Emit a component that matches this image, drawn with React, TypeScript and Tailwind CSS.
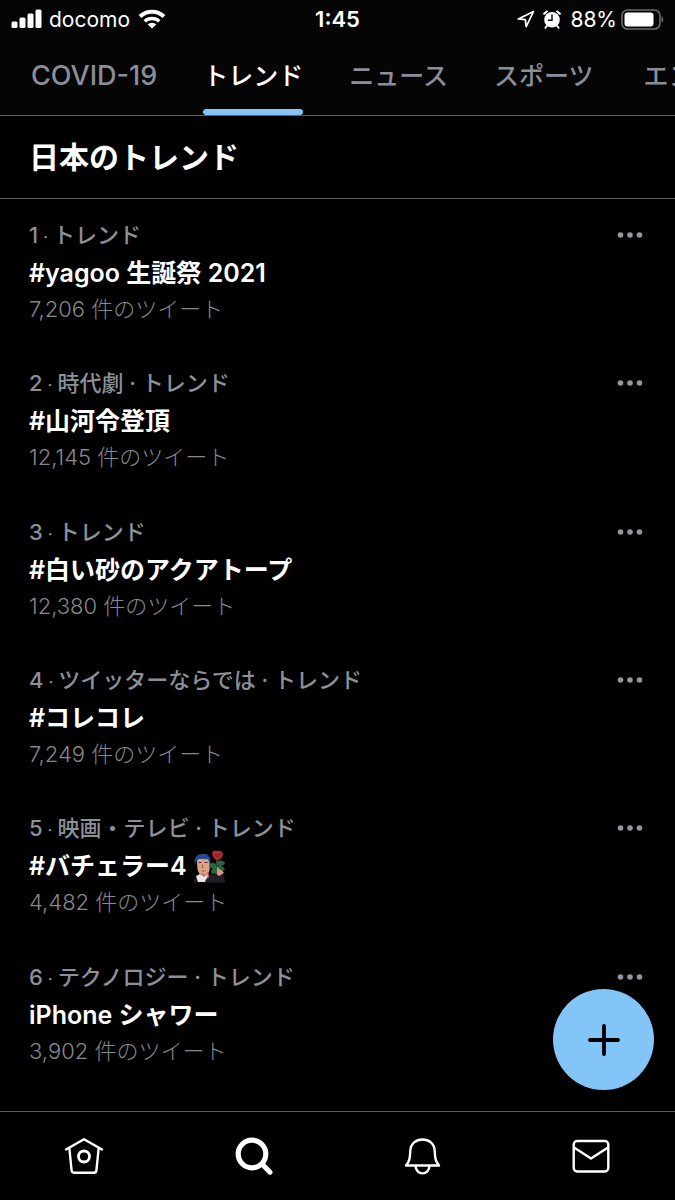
import { useState } from 'react';
import clsx from 'clsx';

const tabs = ['COVID-19', 'トレンド', 'ニュース', 'スポーツ', 'エンタメ'];

interface Trend {
  rank: number;
  category: string;
  name: string;
  tweets: string;
  sticker?: boolean;
}

const trends: Trend[] = [
  { rank: 1, category: 'トレンド', name: '#yagoo 生誕祭 2021', tweets: '7,206' },
  { rank: 2, category: '時代劇 · トレンド', name: '#山河令登頂', tweets: '12,145' },
  { rank: 3, category: 'トレンド', name: '#白い砂のアクアトープ', tweets: '12,380' },
  { rank: 4, category: 'ツイッターならでは · トレンド', name: '#コレコレ', tweets: '7,249' },
  { rank: 5, category: '映画・テレビ · トレンド', name: '#バチェラー4', tweets: '4,482', sticker: true },
  { rank: 6, category: 'テクノロジー · トレンド', name: 'iPhone シャワー', tweets: '3,902' },
];

function StatusBar() {
  return (
    <div className="grid h-[38px] grid-cols-3 items-center px-[11px] text-[21px] leading-none">
      <div className="flex items-center">
        <svg width="31" height="20" viewBox="0 0 31 20" fill="currentColor" aria-label="電波">
          <rect x="0.5" y="12.5" width="6" height="6.5" rx="1.5" />
          <rect x="8.5" y="8.5" width="6" height="10.5" rx="1.5" />
          <rect x="16.5" y="4.5" width="6" height="14.5" rx="1.5" />
          <rect x="24.5" y="0.5" width="6" height="18.5" rx="1.5" />
        </svg>
        <span className="ml-[7px]">docomo</span>
        <svg className="ml-2" width="28" height="20" viewBox="0 0 28 20" aria-label="Wi-Fi">
          <path d="M2 7.500a17.500 17.500 0 0 1 24 0" fill="none" stroke="currentColor" strokeWidth="3.8" />
          <path d="M6.700 12.300a10.800 10.800 0 0 1 14.600 0" fill="none" stroke="currentColor" strokeWidth="3.4" />
          <path d="M14 19.500l-4.200-4a6.200 6.200 0 0 1 8.400 0z" fill="currentColor" />
        </svg>
      </div>
      <div className="text-center text-[22px] font-semibold">1:45</div>
      <div className="flex items-center justify-end">
        <svg width="18" height="18" viewBox="0 0 18 18" fill="none" stroke="currentColor" strokeWidth="1.7" strokeLinejoin="round" aria-label="位置情報">
          <path d="M16.5 1.500L1.300 9l7 .7.9 7z" />
        </svg>
        <svg className="ml-2" width="18" height="19" viewBox="0 0 18 19" aria-label="アラーム">
          <path d="M1.200 3.800l2.600-2.300M16.800 3.800l-2.600-2.300" fill="none" stroke="currentColor" strokeWidth="2.2" strokeLinecap="round" />
          <path d="M4.200 15.500l-1.800 2.400M13.800 15.500l1.800 2.400" stroke="currentColor" strokeWidth="1.8" strokeLinecap="round" />
          <circle cx="9" cy="9.800" r="7.800" fill="currentColor" />
          <path d="M9 5v5.200H5.400" fill="none" stroke="#000" strokeWidth="1.4" strokeLinecap="round" />
        </svg>
        <span className="ml-[9px]">88%</span>
        <svg className="ml-1" width="43" height="21" viewBox="0 0 43 21" aria-label="バッテリー">
          <rect x="1" y="1" width="38" height="19" rx="5.5" fill="none" stroke="#6b6b6d" strokeWidth="1.6" />
          <rect x="3.5" y="3.5" width="29" height="14" rx="3" fill="#fff" />
          <path d="M40.5 7.300c2.400.8 2.400 5.600 0 6.400z" fill="#6b6b6d" />
        </svg>
      </div>
    </div>
  );
}

function Sticker() {
  return (
    <svg width="33" height="33" viewBox="0 0 33 33" aria-label="バチェラー">
      <path d="M0 32.500l3-6 9-4 7 2 11-1 2.500 9z" fill="#221d23" />
      <path d="M4 12c0-7 13-8 13-1l-.5 9c-1 4-4 6-6 6-3 0-5-3-6-7z" fill="#dba58a" />
      <path d="M8 23l5 1 2-3 1 6-6 5H6z" fill="#bd8069" />
      <path d="M3 26l4-2 4 3 4-3-3 8H5z" fill="#e9e3e3" />
      <path d="M2 14C0 7 5 4 9 4c6-1 10 4 8 11l-2-6c-4 1-8-1-11 1z" fill="#264a91" />
      <path d="M5.500 12.500h3M11.500 12.500h3" stroke="#4b2e2a" strokeWidth="1.2" />
      <path d="M9.700 14l-.7 3.500h2M8 20.500c1.500 1 3.500 1 5-.2" fill="none" stroke="#a35b4d" strokeWidth="0.9" />
      <path d="M22 16l5 1 4 6-5 3-5-4z" fill="#cf9a80" />
      <path d="M24 10l-1 14" stroke="#275338" strokeWidth="1.6" />
      <path d="M23 14c-4-3-7 0-7 3 2 2 5 2 7-1zM24 12c3-3 7-1 8 1-1 3-5 4-8 2zM24 17c-5 0-7 4-5 7 3 0 5-2 5-7zM25 16c4-1 6 1 7 4-3 1-6 0-7-3z" fill="#2e6240" />
      <path d="M19 3c1-3 4-3 5-2 3-1 6 1 6 3-1 4-3 6-6 6-3 0-4-4-5-7z" fill="#b62b32" />
      <path d="M21 3c2 2 5 2 7 0M22 5c1 2 4 2 5 0" fill="none" stroke="#7d1a24" strokeWidth="0.9" />
    </svg>
  );
}

function TrendRow({ trend }: { trend: Trend }) {
  return (
    <li className="flex flex-1 items-start justify-between pl-[29px] pr-[31px] pt-5">
      <div>
        <p className="text-[22px] font-medium leading-8 text-[#8b9099]">
          {trend.rank}
          <span className="mx-[5px] text-base">·</span>
          {trend.category}
        </p>
        <h2 className="flex items-center text-[25px] font-semibold leading-[44px]">
          {trend.name}
          {trend.sticker && (
            <span className="ml-1.5">
              <Sticker />
            </span>
          )}
        </h2>
        <p className="text-[22px] font-light leading-7 text-[#85888e]">{trend.tweets} 件のツイート</p>
      </div>
      <button type="button" aria-label="その他" className="flex h-8 items-center text-[#94979c]">
        <svg width="27" height="6" viewBox="0 0 27 6" fill="currentColor">
          <circle cx="3.5" cy="3" r="2.8" />
          <circle cx="13" cy="3" r="2.8" />
          <circle cx="22.5" cy="3" r="2.8" />
        </svg>
      </button>
    </li>
  );
}

function BottomNav() {
  return (
    <nav className="grid h-[89px] grid-cols-4 border-t border-[#5d5d5d]">
      <a href="#home" aria-label="ホーム" className="flex items-center justify-center">
        <svg width="42" height="40" viewBox="0 0 42 40" fill="none" stroke="currentColor" strokeWidth="2.4" strokeLinecap="round" strokeLinejoin="round">
          <path d="M3 13.500L21 3.200l18 10.300" />
          <path d="M6.300 12l2.300 22.500a2.500 2.500 0 0 0 2.500 2.200h19.800a2.500 2.500 0 0 0 2.500-2.200L35.700 12" />
          <circle cx="21" cy="20.500" r="5.500" strokeWidth="2.800" />
        </svg>
      </a>
      <a href="#search" aria-label="検索" className="flex items-center justify-center">
        <svg width="40" height="40" viewBox="0 0 40 40" fill="none" stroke="currentColor" strokeLinecap="round">
          <circle cx="19" cy="18" r="13.8" strokeWidth="5.2" />
          <path d="M29.500 28.500l7.500 7.700" strokeWidth="5" />
        </svg>
      </a>
      <a href="#notifications" aria-label="通知" className="flex items-center justify-center">
        <svg width="40" height="40" viewBox="0 0 40 40" fill="none" stroke="currentColor" strokeWidth="2.4" strokeLinejoin="round">
          <path d="M4 29.500c3-3.500 4-6 4.300-14.500C8.700 7.500 14 3.500 20.500 3.500S32.300 7.500 32.700 15c.3 8.500 1.300 11 4.300 14.500z" />
          <path d="M13.500 29.500c0 10.500 14 10.500 14 0" />
        </svg>
      </a>
      <a href="#messages" aria-label="メッセージ" className="flex items-center justify-center">
        <svg width="40" height="40" viewBox="0 0 40 40" fill="none" stroke="currentColor" strokeWidth="2.4" strokeLinejoin="round">
          <rect x="2.7" y="5" width="34.6" height="30.5" rx="3.500" />
          <path d="M3 11.500l17 11 17-11" />
        </svg>
      </a>
    </nav>
  );
}

export default function App() {
  const [activeTab, setActiveTab] = useState('トレンド');

  return (
    <div className="relative flex min-h-screen flex-col bg-black font-['Inter','Noto_Sans_CJK_JP',sans-serif] text-white" lang="ja">
      <header className="border-b border-[#5d5d5d] bg-[#050506]">
        <StatusBar />
        <div className="flex h-[77px] gap-[46px] overflow-hidden pl-[31px]">
          {tabs.map((tab) => (
            <button
              key={tab}
              type="button"
              onClick={() => setActiveTab(tab)}
              className={clsx(
                'flex shrink-0 flex-col font-medium last:pl-1',
                tab === 'COVID-19' ? 'text-[27px]' : 'text-[25px]',
                activeTab === tab ? 'text-white' : 'text-[#8b8e99]'
              )}
            >
              <span className="flex flex-1 items-center pt-1.5">{tab}</span>
              <span className={clsx('h-1.5 w-full rounded-sm', activeTab === tab && 'bg-[#83c5f6]')} />
            </button>
          ))}
        </div>
      </header>

      <main className="flex flex-1 flex-col">
        <h1 className="flex h-[83px] items-center border-b border-[#5d5d5d] pl-[29px] text-[30px] font-bold">日本のトレンド</h1>
        <ul className="flex flex-1 flex-col pb-[22px]">
          {trends.map((trend) => (
            <TrendRow key={trend.rank} trend={trend} />
          ))}
        </ul>
      </main>

      <BottomNav />

      {/* floating compose button */}
      <button
        type="button"
        aria-label="ツイートする"
        className="absolute bottom-[110px] right-[21px] flex size-[101px] items-center justify-center rounded-full bg-[#83c5f6] text-black"
      >
        <svg width="34" height="34" viewBox="0 0 34 34" stroke="currentColor" strokeWidth="3.8" strokeLinecap="round">
          <path d="M17 3v28M3 17h28" />
        </svg>
      </button>
    </div>
  );
}
